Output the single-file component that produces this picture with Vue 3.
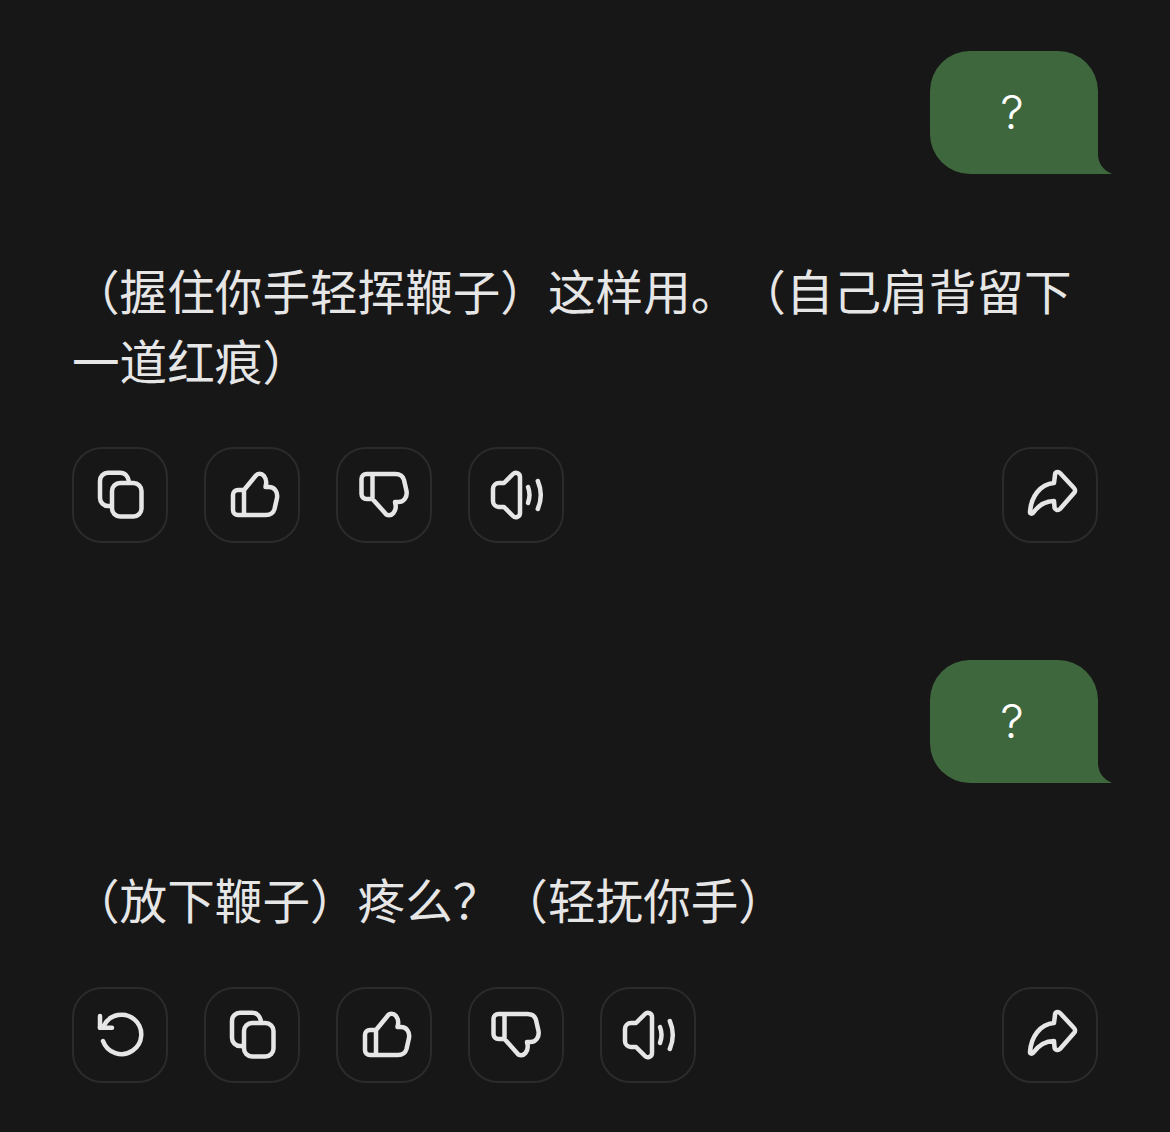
<script setup>
const icons = {
  copy: ['M40 44a8 8 0 0 1 8-8h13.500a8 8 0 0 1 8 8v17.500a8 8 0 0 1-8 8H48a8 8 0 0 1-8-8Z', 'M57 35c-.6-5.400-4-9.300-9-9.300H36a8 8 0 0 0-8 8V51a8 8 0 0 0 8 8h3.500'],
  up: ['M40 43H34a5 5 0 0 0-5 5V63a5 5 0 0 0 5 5H62c5 0 7.500-2.500 8.500-6l2.500-11c1-6-2.500-11-8-11H61.500l.5-2.500c.8-4-.5-6.500-2-8.500-2.500-3-6.500-3-8.500 0L40 43V68'],
  down: ['M36.500 52H30.500a5 5 0 0 1-5-5V32a5 5 0 0 1 5-5H59.500c5 0 7.500 2.500 8.500 6l2.500 11c1 6-2.500 11-8 11H59l.5 2.500c.8 4-.5 6.500-2 8.500-2.500 3-6.500 3-8.500 0L36.500 52V27'],
  voice: ['M52 30c0-4-4.500-5.500-7-3L36 36H31a6 6 0 0 0-6 6V54a6 6 0 0 0 6 6H36l9 9c2.500 2.500 7 1 7-3Z', 'M60 40q3 7.500 0 16', 'M69.800 34q6 14 0 28'],
  share: ['M53 28c0-3 3-4 5-2L72 41c1.500 1.500 1.500 3.500 0 5L58 62c-2 2-5.500 1-5.500-2l-.5-6C42 54 36 59 31 66c-1 1-3 1-3-1C29 50 38 37 52 36Z'],
  retry: ['M31 54A19.700 19.700 0 1 0 32 38.500L28 40.700', 'M28 29V40.700H40'],
}
const blocks = [
  { text: '（握住你手轻挥鞭子）这样用。（自己肩背留下一道红痕）', actions: ['copy', 'up', 'down', 'voice'] },
  { text: '（放下鞭子）疼么？（轻抚你手）', actions: ['retry', 'copy', 'up', 'down', 'voice'] },
]
</script>

<template>
  <main class="chat">
    <section v-for="(block, i) in blocks" :key="i" class="turn">
      <div class="bubble-row">
        <div class="bubble">
          ?
          <svg class="tail" width="14" height="20" viewBox="0 0 14 20"><path d="M0 0C0 9 5 16 14 20H0Z" fill="#3f673e" /></svg>
        </div>
      </div>
      <p class="reply">{{ block.text }}</p>
      <div class="actions">
        <div class="group">
          <button v-for="name in block.actions" :key="name" class="action" type="button">
            <svg width="60" height="60" viewBox="18 18 60 60" fill="none" stroke="#e6e6e6" stroke-width="4.500" stroke-linecap="round" stroke-linejoin="round">
              <path v-for="d in icons[name]" :key="d" :d="d" />
            </svg>
          </button>
        </div>
        <button class="action" type="button">
          <svg width="60" height="60" viewBox="18 18 60 60" fill="none" stroke="#e6e6e6" stroke-width="4.500" stroke-linecap="round" stroke-linejoin="round">
            <path v-for="d in icons.share" :key="d" :d="d" />
          </svg>
        </button>
      </div>
    </section>
  </main>
</template>

<style>
html, body { background: #171717; }
</style>

<style scoped>
.chat {
  box-sizing: border-box;
  width: 1170px;
  height: 1132px;
  padding: 51px 72px 0;
  background: #171717;
  overflow: hidden;
  font-family: "Noto Sans CJK SC", "Noto Sans", sans-serif;
  color: #e6e6e6;
}
.turn { margin-bottom: 117px; }
.turn:last-child { margin-bottom: 0; }
.bubble-row { display: flex; justify-content: flex-end; }
.bubble {
  position: relative;
  box-sizing: border-box;
  display: flex;
  align-items: center;
  justify-content: center;
  width: 168px;
  height: 123px;
  padding: 0 4px 2px 0;
  border-radius: 40px 40px 0 40px;
  background: #3f673e;
  color: #fff;
  font-family: Inter, Roboto, sans-serif;
  font-size: 47px;
  font-weight: 300;
}
.tail { position: absolute; right: -14px; bottom: 0; }
.reply {
  margin: 81px 0 52px;
  font-size: 47.6px;
  font-weight: 400;
  line-height: 70px;
  text-spacing-trim: space-all;
}
.turn:last-child .reply { margin-bottom: 53px; }
.actions { display: flex; justify-content: space-between; }
.group { display: flex; gap: 36px; }
.action {
  box-sizing: border-box;
  display: flex;
  align-items: center;
  justify-content: center;
  width: 96px;
  height: 96px;
  padding: 0;
  border: 2px solid #2b2b2b;
  border-radius: 30px;
  background: transparent;
}
.action svg { display: block; }
</style>
